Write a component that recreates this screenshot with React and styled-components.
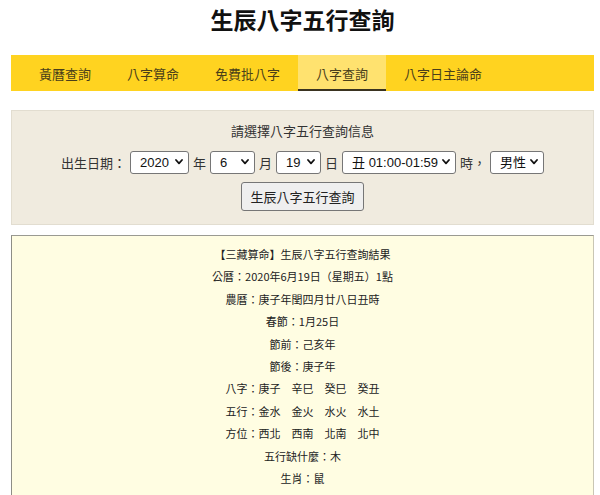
import React from "react";
import styled, { createGlobalStyle } from "styled-components";

const Global = createGlobalStyle`
  html, body { margin: 0; padding: 0; background: #ffffff; }
  body {
    font-family: "Liberation Sans", "Noto Sans CJK TC", Arial, sans-serif;
    color: #222;
  }
`;

const Page = styled.div`
  width: 583px;
  padding: 0 6px 0 11px;
`;

const Title = styled.h1`
  margin: 0;
  height: 38px;
  line-height: 38px;
  text-align: center;
  font-family: "Noto Sans CJK TC", sans-serif;
  font-size: 23px;
  font-weight: 700;
  color: #111;
`;

const Nav = styled.nav`
  margin-top: 17px;
  height: 36px;
  background: #ffd320;
  display: flex;
  padding-left: 10px;
  box-sizing: border-box;
`;

const Tab = styled.a`
  display: flex;
  align-items: center;
  padding: 0 18px;
  font-family: "Noto Sans CJK TC", sans-serif;
  font-size: 13px;
  color: #4a3f1a;
  text-decoration: none;
  box-sizing: border-box;
  background: ${(p) => (p.$active ? "#ffe26f" : "transparent")};
  border-bottom: 2px solid ${(p) => (p.$active ? "#3a3320" : "transparent")};
  border-top: 2px solid transparent;
`;

const FormPanel = styled.section`
  margin-top: 19px;
  height: 115px;
  box-sizing: border-box;
  background: #f0ebdf;
  border: 1px solid #e2ddd0;
  padding-top: 10px;
  display: flex;
  flex-direction: column;
  align-items: center;
  font-family: "Noto Sans CJK TC", sans-serif;
  font-size: 13px;
  color: #333;
`;

const Prompt = styled.div`
  line-height: 20px;
`;

const Row = styled.div`
  margin-top: 10px;
  display: flex;
  align-items: center;
  gap: 4px;
  line-height: 23px;
`;

const Label = styled.span`
  font-size: 13px;
`;

const SelectWrap = styled.span`
  position: relative;
  display: inline-flex;
  width: ${(p) => p.$w}px;
  height: 23px;
`;

const Select = styled.select`
  appearance: none;
  -webkit-appearance: none;
  width: 100%;
  height: 100%;
  font-family: "Liberation Sans", "Noto Sans CJK TC", Arial, sans-serif;
  font-size: 13px;
  color: #111;
  background: #fff;
  border: 1px solid #767676;
  border-radius: 3px;
  padding: 0 16px 0 9px;
  box-sizing: border-box;
  outline: none;
`;

const Chevron = styled.svg`
  position: absolute;
  right: 6px;
  top: 8px;
  width: 8px;
  height: 6px;
  pointer-events: none;
`;

const Button = styled.button`
  margin-top: 8px;
  width: 123px;
  height: 29px;
  font-family: "Noto Sans CJK TC", sans-serif;
  font-size: 13px;
  color: #222;
  background: #efefef;
  border: 1px solid #767676;
  border-radius: 3px;
  padding: 0;
`;

const ResultPanel = styled.section`
  margin-top: 10px;
  height: 262px;
  box-sizing: border-box;
  background: #fffde2;
  border: 1px solid #c9c6b4;
  border-top-color: #9a9a92;
  border-left-color: #8e8e86;
  padding-top: 7px;
  text-align: center;
  font-family: "Noto Sans CJK TC", sans-serif;
  font-size: 11px;
  color: #222;
  overflow: hidden;
`;

const Line = styled.div`
  line-height: 22.4px;
`;

function Dropdown({ w, value, options }) {
  return (
    <SelectWrap $w={w}>
      <Select defaultValue={value}>
        {options.map((o) => (
          <option key={o} value={o}>{o}</option>
        ))}
      </Select>
      <Chevron viewBox="0 0 8 6">
        <path d="M1 1 L4 4.3 L7 1" fill="none" stroke="#111" strokeWidth="1.8" strokeLinecap="round" strokeLinejoin="round" />
      </Chevron>
    </SelectWrap>
  );
}

const years = ["2018", "2019", "2020", "2021", "2022"];
const months = Array.from({ length: 12 }, (_, i) => String(i + 1));
const days = Array.from({ length: 31 }, (_, i) => String(i + 1));
const hours = ["子 23:00-00:59", "丑 01:00-01:59", "寅 03:00-04:59", "卯 05:00-06:59"];

const tabs = ["黃曆查詢", "八字算命", "免費批八字", "八字查詢", "八字日主論命"];

const results = [
  "【三藏算命】生辰八字五行查詢結果",
  "公曆：2020年6月19日（星期五）1點",
  "農曆：庚子年閏四月廿八日丑時",
  "春節：1月25日",
  "節前：己亥年",
  "節後：庚子年",
  "八字：庚子\u3000辛巳\u3000癸巳\u3000癸丑",
  "五行：金水\u3000金火\u3000水火\u3000水土",
  "方位：西北\u3000西南\u3000北南\u3000北中",
  "五行缺什麼：木",
  "生肖：鼠",
];

export default function App() {
  return (
    <>
      <Global />
      <Page>
        <Title>生辰八字五行查詢</Title>
        <Nav>
          {tabs.map((t) => (
            <Tab key={t} href="#" $active={t === "八字查詢"}>
              {t}
            </Tab>
          ))}
        </Nav>
        <FormPanel>
          <Prompt>請選擇八字五行查詢信息</Prompt>
          <Row>
            <Label>出生日期：</Label>
            <Dropdown w={59} value="2020" options={years} />
            <Label>年</Label>
            <Dropdown w={45} value="6" options={months} />
            <Label>月</Label>
            <Dropdown w={45} value="19" options={days} />
            <Label>日</Label>
            <Dropdown w={114} value="丑 01:00-01:59" options={hours} />
            <Label>時，</Label>
            <Dropdown w={54} value="男性" options={["男性", "女性"]} />
          </Row>
          <Button type="button">生辰八字五行查詢</Button>
        </FormPanel>
        <ResultPanel>
          {results.map((r) => (
            <Line key={r}>{r}</Line>
          ))}
        </ResultPanel>
      </Page>
    </>
  );
}
